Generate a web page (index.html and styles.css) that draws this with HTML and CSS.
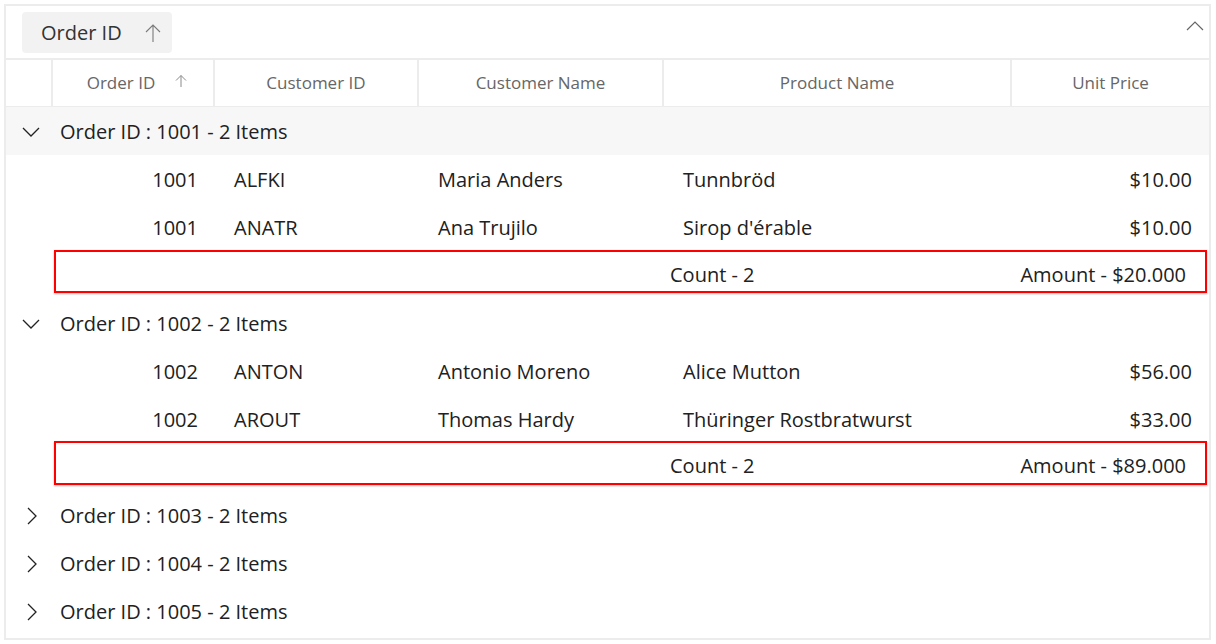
FILE: index.html
```html
<!DOCTYPE html>
<html>
<head>
<meta charset="utf-8">
<link rel="stylesheet" href="styles.css">
</head>
<body>
<div class="grid">
  <div class="drop-area">
    <div class="chip">
      <span class="chip-text">Order ID</span>
      <svg class="chip-arrow" width="16" height="20" viewBox="0 0 16 20"><path d="M8 19V2M1 9L8 2L15 9" fill="none" stroke="#7a7a7a" stroke-width="1.1"/></svg>
    </div>
    <svg class="collapse" width="18" height="12" viewBox="0 0 18 12"><path d="M1 10L9 2L17 10" fill="none" stroke="#666" stroke-width="1.2"/></svg>
  </div>
  <div class="row header">
    <div class="hcell"></div>
    <div class="hcell sorted">Order ID <svg class="sort-arrow" width="12" height="14" viewBox="0 0 12 14"><path d="M6 13V1.5M1 6.5L6 1.5L11 6.5" fill="none" stroke="#8a8a8a" stroke-width="1"/></svg></div>
    <div class="hcell">Customer ID</div>
    <div class="hcell">Customer Name</div>
    <div class="hcell">Product Name</div>
    <div class="hcell last">Unit Price</div>
  </div>

  <div class="group first">
    <svg class="chev" width="18" height="12" viewBox="0 0 18 12"><path d="M1 2L9 10L17 2" fill="none" stroke="#222" stroke-width="1.3"/></svg>
    <span>Order ID : 1001 - 2 Items</span>
  </div>
  <div class="row data">
    <div></div><div class="num">1001</div><div class="txt">ALFKI</div><div class="txt">Maria Anders</div><div class="txt">Tunnbröd</div><div class="num">$10.00</div>
  </div>
  <div class="row data">
    <div></div><div class="num">1001</div><div class="txt">ANATR</div><div class="txt">Ana Trujilo</div><div class="txt">Sirop d'érable</div><div class="num">$10.00</div>
  </div>
  <div class="summary">
    <div class="sumbox"><span class="count">Count - 2</span><span class="amount">Amount - $20.000</span></div>
  </div>

  <div class="group">
    <svg class="chev" width="18" height="12" viewBox="0 0 18 12"><path d="M1 2L9 10L17 2" fill="none" stroke="#222" stroke-width="1.3"/></svg>
    <span>Order ID : 1002 - 2 Items</span>
  </div>
  <div class="row data">
    <div></div><div class="num">1002</div><div class="txt">ANTON</div><div class="txt">Antonio Moreno</div><div class="txt">Alice Mutton</div><div class="num">$56.00</div>
  </div>
  <div class="row data">
    <div></div><div class="num">1002</div><div class="txt">AROUT</div><div class="txt">Thomas Hardy</div><div class="txt">Thüringer Rostbratwurst</div><div class="num">$33.00</div>
  </div>
  <div class="summary second">
    <div class="sumbox"><span class="count">Count - 2</span><span class="amount">Amount - $89.000</span></div>
  </div>

  <div class="group">
    <svg class="chev right" width="12" height="18" viewBox="0 0 12 18"><path d="M2 1L10 9L2 17" fill="none" stroke="#222" stroke-width="1.3"/></svg>
    <span>Order ID : 1003 - 2 Items</span>
  </div>
  <div class="group">
    <svg class="chev right" width="12" height="18" viewBox="0 0 12 18"><path d="M2 1L10 9L2 17" fill="none" stroke="#222" stroke-width="1.3"/></svg>
    <span>Order ID : 1004 - 2 Items</span>
  </div>
  <div class="group">
    <svg class="chev right" width="12" height="18" viewBox="0 0 12 18"><path d="M2 1L10 9L2 17" fill="none" stroke="#222" stroke-width="1.3"/></svg>
    <span>Order ID : 1005 - 2 Items</span>
  </div>
</div>
</body>
</html>
```

FILE: styles.css
```css
* { box-sizing: border-box; }
html, body { margin: 0; padding: 0; background: #fff; }
body {
  font-family: "Open Sans", "Noto Sans", sans-serif;
  color: #212121;
  padding: 4px 0 0 4px;
}
.grid {
  width: 1207px;
  height: 636px;
  border: 2px solid #ececec;
  overflow: hidden;
  display: flex;
  flex-direction: column;
}
.drop-area {
  height: 52px;
  flex-shrink: 0;
  padding: 6px 0 0 16px;
  display: flex;
  align-items: flex-start;
  justify-content: space-between;
}
.chip {
  width: 150px;
  height: 41px;
  background: #f2f2f2;
  border-radius: 4px;
  display: flex;
  align-items: center;
  padding-left: 19px;
  font-size: 20px;
  color: #333;
}
.chip-text { width: 104px; }
.chip-arrow { margin-top: 1px; }
.collapse { margin: 8px 5px 0 0; }
.row {
  display: grid;
  grid-template-columns: 47px 162px 204px 245px 348px 1fr;
}
.header {
  height: 49px;
  flex-shrink: 0;
  border-top: 2px solid #ececec;
  border-bottom: 1px solid #ececec;
}
.hcell {
  border-right: 2px solid #ececec;
  display: flex;
  align-items: center;
  justify-content: center;
  font-size: 17px;
  color: #666;
  padding-bottom: 2px;
}
.hcell.last { border-right: 0; }
.hcell.sorted { padding-left: 8px; }
.sort-arrow { margin-left: 20px; margin-top: -2px; }
.group {
  height: 48px;
  display: flex;
  align-items: center;
  font-size: 20px;
  color: #212121;
  flex-shrink: 0;
}
.group.first { background: #f7f7f7; }
.chev { margin-left: 16px; margin-right: 20px; margin-top: 1px; }
.chev.right { margin-left: 20px; margin-right: 22px; }
.data {
  height: 48px;
  font-size: 20px;
  flex-shrink: 0;
}
.data > div { display: flex; align-items: center; padding-top: 1px; }
.data .num { justify-content: flex-end; padding-right: 17px; }
.data .txt { padding-left: 19px; }
.summary {
  height: 48px;
  flex-shrink: 0;
  padding-left: 48px;
  padding-right: 2px;
}
.sumbox {
  height: 43px;
  margin-top: -1px;
  border: 2px solid #ff0000;
  box-shadow: 0 1px 2px rgba(0,0,0,0.25);
  display: flex;
  align-items: center;
  font-size: 20px;
  padding-right: 19px;
  padding-top: 5px;
}
.summary.second .sumbox { margin-top: -2px; height: 44px; }
.count { margin-left: 614px; }
.amount { margin-left: auto; }
```
